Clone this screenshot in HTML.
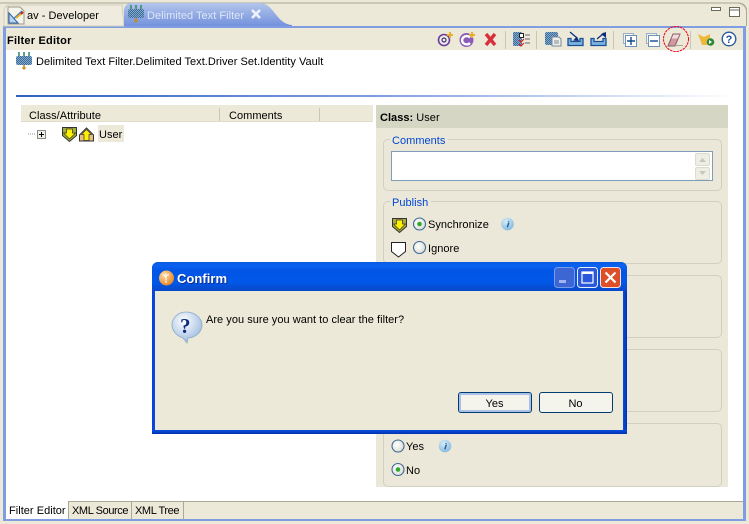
<!DOCTYPE html>
<html><head><meta charset="utf-8"><style>
html,body{margin:0;padding:0;width:749px;height:524px;overflow:hidden;background:#ece9d8}
.a{position:absolute}
.t{position:absolute;font:11px/14px "Liberation Sans",sans-serif;color:#000;white-space:nowrap;letter-spacing:.03px}
.leg{color:#0046d5;background:#ebe8d9;padding:0 3px 0 2px}
.g{position:absolute;left:383px;width:337px;border:1px solid #d0d0bf;border-radius:5px;box-sizing:content-box}
svg{position:absolute;left:0;top:0}
</style></head><body>
<div class="a" id="p" style="left:0;top:0;width:749px;height:524px;background:#ece9d8"></div>
<div class="a" style="left:3px;top:26px;width:743px;height:495px;background:#7f9de0"></div>
<div class="a" style="left:6px;top:28px;width:737px;height:473px;background:#fff"></div>
<div class="a" style="left:6px;top:28px;width:737px;height:22px;background:#ece9d8"></div>
<div class="a" style="left:6px;top:501px;width:737px;height:18px;background:#ece9d8;border-top:1px solid #aca899;box-sizing:border-box"></div>
<div class="a" style="left:6px;top:501px;width:62px;height:18px;background:#fff"></div>
<div class="a" style="left:68px;top:501px;width:1px;height:18px;background:#aca899"></div>
<div class="a" style="left:131px;top:501px;width:1px;height:18px;background:#aca899"></div>
<div class="a" style="left:183px;top:501px;width:1px;height:18px;background:#aca899"></div>
<div class="a" style="left:16px;top:95px;width:720px;height:2px;background:linear-gradient(90deg,#2f62c0,#7f9de0 50%,#fff)"></div>
<div class="a" style="left:21px;top:105px;width:352px;height:17px;background:#ece9d8;border-bottom:1px solid #e0ddcc;box-sizing:border-box"></div>
<div class="a" style="left:219px;top:108px;width:1px;height:13px;background:#c9c6b5"></div>
<div class="a" style="left:319px;top:108px;width:1px;height:13px;background:#c9c6b5"></div>
<div class="a" style="left:98px;top:125px;width:26px;height:17px;background:#ece9d8"></div>
<div class="a" style="left:376px;top:105px;width:352px;height:382px;background:#ebe8d9"></div>
<div class="a" style="left:376px;top:105px;width:352px;height:23px;background:#d6d6c4"></div>
<div class="g" style="top:139px;height:50px"></div>
<div class="g" style="top:201px;height:61px"></div>
<div class="g" style="top:275px;height:61px"></div>
<div class="g" style="top:349px;height:61px"></div>
<div class="g" style="top:423px;height:62px"></div>
<div class="a" style="left:391px;top:151px;width:322px;height:30px;background:#fff;border:1px solid #7f9db9;box-sizing:border-box"></div>

<svg width="749" height="524" viewBox="0 0 749 524">
<defs>
<linearGradient id="tb" x1="0" y1="0" x2="0" y2="1"><stop offset="0" stop-color="#b3c5ec"/><stop offset="1" stop-color="#7392dc"/></linearGradient>
<radialGradient id="rad" cx=".4" cy=".4" r=".7"><stop offset="0" stop-color="#fff"/><stop offset="1" stop-color="#d8d8d0"/></radialGradient>
<radialGradient id="inf" cx=".4" cy=".3" r=".8"><stop offset="0" stop-color="#d6ecf8"/><stop offset="1" stop-color="#7db5dc"/></radialGradient>
<radialGradient id="bub" cx=".4" cy=".3" r=".8"><stop offset="0" stop-color="#fff"/><stop offset="1" stop-color="#8fb2dc"/></radialGradient>
<radialGradient id="org" cx=".35" cy=".3" r=".8"><stop offset="0" stop-color="#fcd9a0"/><stop offset="1" stop-color="#e9801c"/></radialGradient>
<pattern id="chk" width="2" height="2" patternUnits="userSpaceOnUse"><rect width="2" height="2" fill="#7fa8cc"/><rect width="1" height="1" fill="#3f6c98"/><rect x="1" y="1" width="1" height="1" fill="#3f6c98"/></pattern>
<g id="fil"><rect x="0" y="4" width="16" height="9" rx="2" fill="url(#chk)"/><path d="M3 0v4M8 0v4M13 0v4" stroke="#3f8a70" stroke-width="1.600"/><path d="M8 13v4" stroke="#c88a14" stroke-width="1.600"/><path d="M5.500 15.500h5l-2.500 2.500z" fill="#c88a14"/></g>
<g id="sh"><path d="M.5.5h14v8l-7 6-7-6z" fill="#a6ad3c" stroke="#333" stroke-width="1"/><path d="M4.500 2h6v4h3l-6 6-6-6h3z" fill="#fff200" stroke="#333" stroke-width=".7"/></g>
<g id="rb"><circle cx="6.500" cy="6.500" r="6" fill="url(#rad)" stroke="#3d6a96" stroke-width="1.100"/></g>
<g id="dot"><circle cx="6.500" cy="6.500" r="2.300" fill="#2fa82f"/></g>
<g id="info"><circle cx="6.500" cy="6.500" r="6.300" fill="url(#inf)"/><path d="M7.500 3.500v.8M6.800 5.800h.8L6.300 9.800" stroke="#225a96" stroke-width="1.400" fill="none"/></g>
</defs>

<path d="M0 2.500H738Q745 2.500 747 9V26H746V10Q744 4 738 3.500H0z" fill="#aca899"/>
<path d="M4 26V12Q4 5 10 5H122L124 26z" fill="#efecdf" stroke="#d2cfbd"/>
<path d="M124 26V10Q125 3 132 3H260C274 3 276 24 292 25V26z" fill="url(#tb)"/>

<use href="#fil" x="128" y="5"/>
<g transform="translate(7 6)"><path d="M1 1h12l4 4v13H1z" fill="#f4f4ea" stroke="#9a9a88"/><path d="M2 17l13-12" stroke="#3a78c0" stroke-width="1.400"/><path d="M2 7l9 10H2z" fill="#bcd4ee" stroke="#2a62a8"/><path d="M9 12l6-5" stroke="#e8b020" stroke-width="2"/><path d="M14 8l2-2" stroke="#d02020" stroke-width="2"/></g>
<path d="M252 10l8 8M260 10l-8 8" stroke="#eef2fb" stroke-width="2.600"/>
<rect x="711.500" y="7.500" width="9" height="3" fill="#fff" stroke="#6b6b60"/>
<rect x="729.500" y="7.500" width="10" height="9" fill="#fff" stroke="#6b6b60"/><path d="M730 10h9" stroke="#6b6b60"/>

<!-- toolbar -->
<circle cx="444" cy="40" r="5.500" fill="#eee" stroke="#6a3d9a" stroke-width="1.600"/><circle cx="444" cy="40" r="2" fill="none" stroke="#44306a" stroke-width="1.200"/>
<path d="M447 35h6M450 32v6" stroke="#e8b030" stroke-width="2"/>
<circle cx="466.500" cy="40" r="7" fill="#8a5cb8"/><path d="M470 37.500a4.500 4.200 0 1 0 0 5.500" fill="none" stroke="#fff" stroke-width="2.400"/>
<path d="M469 35h6M472 32v6" stroke="#e8b030" stroke-width="2"/>
<path d="M486 34l9 11M495 34l-9 11" stroke="#d8303a" stroke-width="3.400"/>
<rect x="505" y="31" width="1" height="18" fill="#c9c6b5"/>
<rect x="513" y="32" width="9" height="14" rx="1" fill="url(#chk)"/>
<rect x="519.500" y="33.500" width="4" height="4" fill="#fff" stroke="#222"/><path d="M525 35h5M525 39h5M525 43h5" stroke="#667"/><path d="M519 40l2 2 3-3M519 44l2 2 3-3" stroke="#d82020" fill="none" stroke-width="1.200"/>
<rect x="536" y="31" width="1" height="18" fill="#c9c6b5"/>
<rect x="545" y="32" width="13" height="13" rx="2" fill="url(#chk)"/><path d="M552 37h7l2 2v7h-9z" fill="#f0f0e8" stroke="#7a8aa0"/><path d="M554 41h5M554 43h5" stroke="#7a8aa0"/>
<path d="M568 38.500h3v3h9v-3h3v7h-15z" fill="#7cb4e0" stroke="#1d4f96" stroke-width="1.300"/><path d="M570 32l7 6" stroke="#0a2a80" stroke-width="1.200"/><path d="M579 41l-6-.5 4-4z" fill="#0a2a80"/>
<path d="M591 38.500h3v3h9v-3h3v7h-15z" fill="#7cb4e0" stroke="#1d4f96" stroke-width="1.300"/><path d="M597 39l7-6" stroke="#0a2a80" stroke-width="1.200"/><path d="M606 32v6l-5-4z" fill="#0a2a80"/>
<rect x="613" y="31" width="1" height="18" fill="#c9c6b5"/>
<rect x="623.500" y="33.500" width="10" height="10" fill="#f4f4ee" stroke="#9ab0c8"/><rect x="625.500" y="35.500" width="11" height="11" fill="#fff" stroke="#6f93b8"/><path d="M627 41h8M631 37v8" stroke="#134a8e" stroke-width="1.400"/>
<rect x="646.500" y="33.500" width="10" height="10" fill="#f4f4ee" stroke="#9ab0c8"/><rect x="648.500" y="35.500" width="11" height="11" fill="#fff" stroke="#6f93b8"/><path d="M650 41h8" stroke="#134a8e" stroke-width="1.400"/>
<path d="M668 46l5-12h7l-5 12z" fill="#d09aa0" stroke="#8a5a64"/><path d="M673.500 34.500h6l-2 4h-6z" fill="#f0dcdc"/><path d="M675 45.500h8" stroke="#a8a898"/>
<circle cx="676" cy="39" r="12.500" fill="none" stroke="#f00010" stroke-dasharray="2.500 .8"/>
<rect x="690" y="31" width="1" height="18" fill="#c9c6b5"/>
<path d="M698 34l6 3 6-3v11h-8z" fill="#ecb93a"/><circle cx="710.500" cy="42" r="3.800" fill="#2c8a3a"/><path d="M709 40v4l3-2z" fill="#fff"/>
<circle cx="729" cy="39" r="6.800" fill="#fff" stroke="#2a5d9c" stroke-width="1.400"/><text x="725.600" y="43" font-family="Liberation Sans" font-size="11" font-weight="bold" fill="#1e4f94">?</text>

<use href="#fil" x="16" y="52"/>
<path d="M28 134h8" stroke="#999" stroke-dasharray="1 1"/>
<rect x="37.500" y="130.500" width="8" height="8" fill="#f2f0e6" stroke="#888"/><path d="M39 134.500h5M41.500 132v5" stroke="#000"/>
<use href="#sh" x="62" y="127"/>
<path d="M79.500 135l7-7 7 7v6h-14z" fill="#e9bf7e" stroke="#333"/><path d="M86.500 129.500l5 5h-2.500v6h-5v-6H81.500z" fill="#fff200" stroke="#333" stroke-width=".7"/>

<!-- scroll buttons -->
<rect x="695.500" y="153.500" width="14" height="12" rx="1.500" fill="#efeee4" stroke="#dcdccd"/><path d="M699 162l3.500-4 3.500 4z" fill="#c8c8ba"/>
<rect x="695.500" y="167.500" width="14" height="12" rx="1.500" fill="#efeee4" stroke="#dcdccd"/><path d="M699 171l3.500 4 3.500-4z" fill="#c8c8ba"/>

<use href="#sh" x="392" y="218"/>
<use href="#rb" x="413" y="217.500"/><use href="#dot" x="413" y="217.500"/>
<use href="#info" x="501" y="217.500"/>
<path d="M391.500 242.500h14v9l-7 5.500-7-5.500z" fill="#fff" stroke="#222"/>
<use href="#rb" x="413" y="241"/>
<use href="#rb" x="391.500" y="439.500"/>
<use href="#info" x="438.500" y="439.500"/>
<use href="#rb" x="391.500" y="463"/><use href="#dot" x="391.500" y="463"/>
</svg>

<!-- dialog -->
<div class="a" style="left:152px;top:262px;width:475px;height:172px;border-radius:6px 6px 0 0;background:linear-gradient(90deg,#0a3fd8,#0a54e8 1%,#0a54e8 99%,#0030b0)"></div>
<div class="a" style="left:152px;top:262px;width:475px;height:29px;border-radius:6px 6px 0 0;background:linear-gradient(180deg,#0a5ae0 0,#0a62f0 12%,#0255e6 30%,#0158e8 70%,#0a48c8 100%)"></div>
<div class="a" style="left:155px;top:291px;width:468px;height:139px;background:#ece9d8"></div>
<div class="a" style="left:152px;top:430px;width:475px;height:4px;background:linear-gradient(#0a50e0,#0030b0)"></div>
<svg width="749" height="524" viewBox="0 0 749 524">
<circle cx="166.500" cy="278" r="7.500" fill="url(#org)"/><path d="M166 273v10M166 276l3-1.500M163 274l3 4" stroke="#fff" stroke-width="1" fill="none"/>
<path d="M186 312c9 0 16 6 16 13s-7 13-14 13l-1 5-4-5c-6-2-11-7-11-13 0-7 6-13 14-13z" fill="url(#bub)" stroke="#8ba8c8" stroke-width=".8"/>
<text x="180" y="333" font-family="Liberation Serif" font-size="21" font-weight="bold" fill="#0a2a80">?</text>

<rect x="554.500" y="267.500" width="20" height="20" rx="3" fill="#3b66d4" stroke="#7b9bea"/><rect x="559" y="280" width="7" height="3" fill="#9fb4ee"/>
<rect x="577.500" y="267.500" width="20" height="20" rx="3" fill="#2a58d8" stroke="#e6ecfb"/><rect x="582" y="272" width="11" height="11" fill="none" stroke="#fff" stroke-width="1.200"/><path d="M582 273h11" stroke="#fff" stroke-width="2"/>
<rect x="600.500" y="267.500" width="20" height="20" rx="3" fill="#dc4f28" stroke="#f2e2dc"/><path d="M605.500 272.500l10 10M615.500 272.500l-10 10" stroke="#fff" stroke-width="2.200"/>

<rect x="458.500" y="392.500" width="73" height="20" rx="2.500" fill="#f4f3ec" stroke="#003c74"/>
<rect x="460" y="394" width="70" height="17" rx="1" fill="none" stroke="#a2bae6" stroke-width="1.800"/>
<rect x="539.500" y="392.500" width="73" height="20" rx="2.500" fill="#f4f3ec" stroke="#003c74"/>
</svg>

<div class="t" style="left:27px;top:9px">av - Developer</div>
<div class="t" style="left:147px;top:9px;color:#dfe6f6">Delimited Text Filter</div>
<div class="t" style="left:7px;top:34px;font-weight:bold;letter-spacing:.22px">Filter Editor</div>
<div class="t" style="left:36px;top:55px">Delimited Text Filter.Delimited Text.Driver Set.Identity Vault</div>
<div class="t" style="left:29px;top:109px">Class/Attribute</div>
<div class="t" style="left:229px;top:109px">Comments</div>
<div class="t" style="left:99px;top:128px">User</div>
<div class="t" style="left:380px;top:111px"><b>Class:</b> User</div>
<div class="t leg" style="left:390px;top:134px">Comments</div>
<div class="t leg" style="left:390px;top:196px">Publish</div>
<div class="t" style="left:428px;top:218px">Synchronize</div>
<div class="t" style="left:428px;top:242px">Ignore</div>
<div class="t" style="left:206px;top:313px">Are you sure you want to clear the filter?</div>
<div class="t" style="left:177px;top:272px;font-size:13px;font-weight:bold;color:#fff;text-shadow:1px 1px 0 #0a2a90">Confirm</div>
<div class="t" style="left:458px;top:397px;width:73px;text-align:center">Yes</div>
<div class="t" style="left:539px;top:397px;width:73px;text-align:center">No</div>
<div class="t" style="left:406px;top:440px">Yes</div>
<div class="t" style="left:406px;top:464px">No</div>
<div class="t" style="left:9px;top:504px">Filter Editor</div>
<div class="t" style="left:72px;top:504px;letter-spacing:-.4px">XML Source</div>
<div class="t" style="left:135px;top:504px;letter-spacing:-.4px">XML Tree</div>
</body></html>
